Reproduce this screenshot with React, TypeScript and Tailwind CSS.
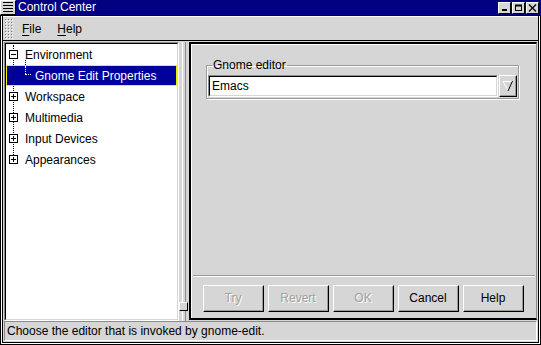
import React from 'react';

const Expander: React.FC<{ open?: boolean }> = ({ open }) => (
  <svg width="9" height="9" viewBox="0 0 9 9" className="shrink-0 relative">
    <rect x="0.5" y="0.5" width="8" height="8" fill="white" stroke="black" />
    <line x1="2" y1="4.5" x2="7" y2="4.5" stroke="black" />
    {!open && <line x1="4.5" y1="2" x2="4.5" y2="7" stroke="black" />}
  </svg>
);

const TitleButton: React.FC<{ kind: 'min' | 'max' | 'close' }> = ({ kind }) => (
  <div className="w-[13px] h-[12px] bg-[#d6d6d6] border-t border-l border-white border-r border-b border-r-black border-b-black flex items-center justify-center">
    <svg width="9" height="8" viewBox="0 0 9 8">
      {kind === 'min' && <rect x="2" y="5" width="5" height="2" fill="black" />}
      {kind === 'max' && (
        <>
          <rect x="1.5" y="1.5" width="6" height="5" fill="none" stroke="black" />
          <line x1="1" y1="1.5" x2="8" y2="1.5" stroke="black" strokeWidth="2" />
        </>
      )}
      {kind === 'close' && (
        <path d="M1 0.5 L8 7.5 M8 0.5 L1 7.5" stroke="black" strokeWidth="1.2" />
      )}
    </svg>
  </div>
);

const Button: React.FC<{ label: string; disabled?: boolean }> = ({ label, disabled }) => (
  <div className="w-[61px] h-[27px] border-t border-l border-white border-r border-b border-r-black border-b-black">
    <div className="w-full h-full border-r border-b border-[#9a9a9a] flex items-center justify-center">
      <span
        className={disabled ? 'text-[#a0a0a0] [text-shadow:1px_1px_0_#ffffff]' : 'text-black'}
      >
        {label}
      </span>
    </div>
  </div>
);

const rows = ['Workspace', 'Multimedia', 'Input Devices', 'Appearances'];

export default function App() {
  return (
    <div className="w-[541px] h-[345px] flex flex-col bg-[#d6d6d6] font-['Liberation_Sans',Arial,sans-serif] text-[12px] text-black overflow-hidden select-none">
      {/* title bar */}
      <div className="h-[15px] flex bg-[#000080] shrink-0">
        <div className="w-[16px] h-[15px] bg-[#d6d6d6] border-t border-l border-white border-r border-b border-r-black border-b-black flex items-center justify-center">
          <svg width="10" height="11" viewBox="0 0 10 11">
            {[1, 4, 7, 10].map((y) => (
              <line key={y} x1="0" y1={y - 0.5} x2="10" y2={y - 0.5} stroke="black" />
            ))}
          </svg>
        </div>
        <span className="ml-[2px] text-white leading-[15px]">Control Center</span>
        <div className="flex-1" />
        <div className="flex gap-[1px] items-end pr-[2px] pb-[1px]">
          <TitleButton kind="min" />
          <TitleButton kind="max" />
          <TitleButton kind="close" />
        </div>
      </div>
      <div className="h-px bg-black shrink-0" />

      {/* window frame */}
      <div className="flex-1 flex flex-col border-x border-b border-black">
        <div className="flex-1 flex flex-col border-x border-b border-white">
          <div className="flex-1 flex flex-col border-x border-b border-black">
            {/* menu bar */}
            <div className="h-[25px] shrink-0 flex items-center border-t border-white border-b border-b-black">
              <svg width="8" height="20" viewBox="0 0 8 20" className="ml-[2px]">
                <defs>
                  <pattern id="grip" width="3" height="3" patternUnits="userSpaceOnUse">
                    <rect x="0" y="0" width="1" height="1" fill="#7a7a7a" />
                    <rect x="1" y="1" width="1" height="1" fill="#ffffff" />
                  </pattern>
                </defs>
                <rect x="0" y="0" width="8" height="20" fill="url(#grip)" />
              </svg>
              <span className="ml-[9px]">
                <span className="underline underline-offset-2">F</span>ile
              </span>
              <span className="ml-[16px]">
                <span className="underline underline-offset-2">H</span>elp
              </span>
            </div>

            {/* main */}
            <div className="h-[280px] shrink-0 flex">
              {/* left pane */}
              <div className="w-[186px] flex pl-[1px] pt-[1px]">
                <div className="w-[175px] flex border-t border-l border-[#8c8c8c] border-r border-b border-r-white border-b-white">
                  <div className="flex-1 border-t border-l border-black border-r border-b border-r-[#d6d6d6] border-b-[#d6d6d6] bg-white relative">
                    {/* tree lines */}
                    <div className="absolute left-[7px] top-[1px] h-[116px] border-l border-dotted border-black" />
                    <div className="absolute left-[19px] top-[16px] h-[5px] border-l border-dotted border-black" />
                    <div className="absolute left-[19px] top-[22px] h-[8px] border-l border-dotted border-white z-10" />
                    <div className="absolute left-[19px] top-[30px] w-[6px] border-t border-dotted border-white z-10" />
                    <div className="h-[21px] flex items-center pl-[3px]">
                      <Expander open />
                      <span className="ml-[7px]">Environment</span>
                    </div>
                    <div className="h-[21px] flex items-center bg-[#00009c] border border-[#f0f000] text-white">
                      <span className="ml-[28px]">Gnome Edit Properties</span>
                    </div>
                    {rows.map((r) => (
                      <div key={r} className="h-[21px] flex items-center pl-[3px]">
                        <Expander />
                        <span className="ml-[7px]">{r}</span>
                      </div>
                    ))}
                  </div>
                </div>
                {/* paned gutter */}
                <div className="w-[10px] relative flex pl-[3px]">
                  <div className="w-[4px] border-l border-white border-r border-r-[#8c8c8c]" />
                  <div className="absolute left-0 bottom-[10px] w-[9px] h-[9px] bg-[#d6d6d6] border-t border-l border-white border-r border-b border-r-black border-b-black" />
                </div>
              </div>

              {/* right pane */}
              <div className="flex-1 mt-[1px] mb-[1px] mr-[1px] border-l-2 border-t-2 border-black border-r border-r-[#8c8c8c] border-b-2 border-b-black flex">
                <div className="flex-1 flex flex-col border-l border-t border-white">
                  <div className="pt-[13px] pl-[14px] pr-[17px]">
                    <fieldset className="border border-[#9a9a9a] shadow-[inset_1px_1px_0_#ffffff,1px_1px_0_#ffffff] px-[1px] pb-[1px]">
                      <legend className="ml-[4px] px-[1px] leading-[14px]">Gnome editor</legend>
                      <div className="flex pt-[3px]">
                        <div className="flex-1 h-[22px] border-t border-l border-[#8c8c8c] border-r border-b border-r-white border-b-white">
                          <div className="h-full bg-white border-t border-l border-black border-r border-b border-r-[#d6d6d6] border-b-[#d6d6d6] flex items-center pl-[2px]">
                            Emacs
                          </div>
                        </div>
                        <div className="w-[18px] h-[22px] ml-[1px] border-t border-l border-white border-r border-b border-r-black border-b-black">
                          <div className="w-full h-full border-r border-b border-[#9a9a9a] flex items-center justify-center">
                            <svg width="12" height="12" viewBox="0 0 12 12">
                              <path d="M1 1.5 H10.5" stroke="#ffffff" />
                              <path d="M1 1.5 L6 10.5" stroke="#ffffff" />
                              <path d="M10.5 1 L6 11" stroke="#000000" />
                            </svg>
                          </div>
                        </div>
                      </div>
                    </fieldset>
                  </div>
                  <div className="flex-1" />
                  <div className="mx-[1px] h-px bg-[#9a9a9a]" />
                  <div className="mx-[1px] h-px bg-white" />
                  <div className="flex justify-end gap-[4px] pr-[12px] pt-[8px] pb-[6px]">
                    <Button label="Try" disabled />
                    <Button label="Revert" disabled />
                    <Button label="OK" disabled />
                    <Button label="Cancel" />
                    <Button label="Help" />
                  </div>
                </div>
              </div>
            </div>

            {/* status bar */}
            <div className="flex-1 flex px-[1px] pb-[1px]">
              <div className="flex-1 border-t border-l border-[#8c8c8c] border-r border-b border-r-white border-b-white flex items-center pl-[2px]">
                Choose the editor that is invoked by gnome-edit.
              </div>
            </div>
          </div>
        </div>
      </div>
    </div>
  );
}
